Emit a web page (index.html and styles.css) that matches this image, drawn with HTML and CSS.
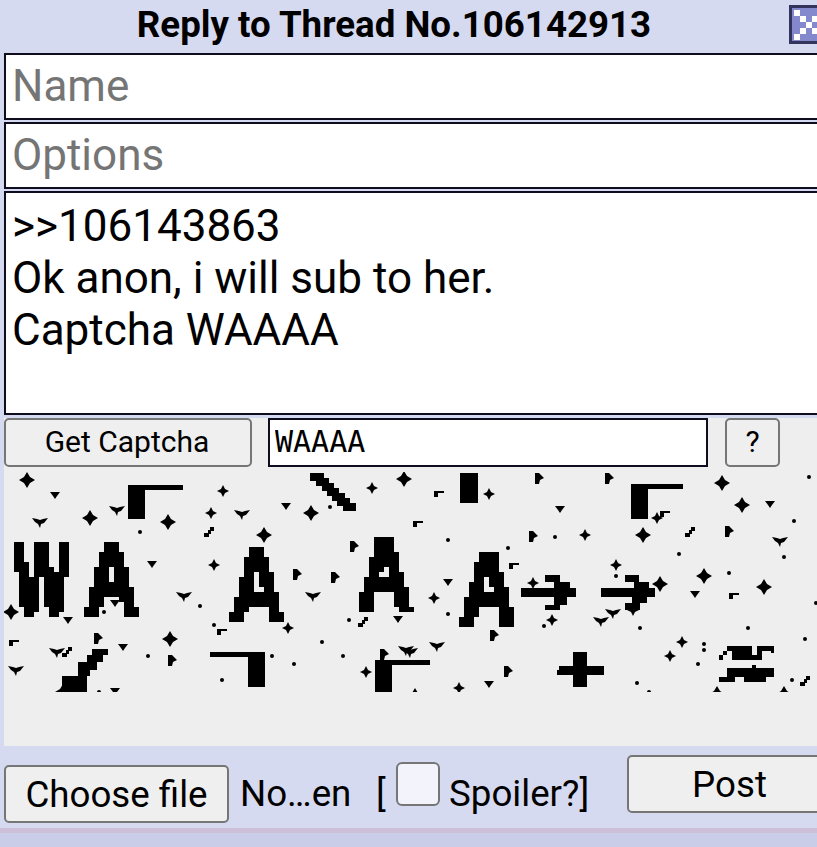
FILE: index.html
```html
<!DOCTYPE html>
<html lang="en">
<head>
<meta charset="utf-8">
<title>Reply to Thread No.106142913</title>
<link rel="stylesheet" href="styles.css">
</head>
<body>
<div class="panel">
  <div class="head">
    <div class="title">Reply to Thread No.106142913</div>
    <svg class="close" viewBox="0 0 37 39" width="37" height="39" shape-rendering="crispEdges">
      <rect width="37" height="39" fill="#34345c"/>
      <rect x="3" y="3" width="34" height="33" fill="#8488cc"/>
      <path fill="#fff" d="M5 5h6v6H5zM11 11h6v6h-6zM17 17h6v6h-6zM11 23h6v6h-6zM5 29h6v6H5zM23 11h6v6h-6zM23 23h6v6h-6z"/>
    </svg>
  </div>
  <form class="form">
    <input class="field" type="text" placeholder="Name">
    <input class="field" type="text" placeholder="Options">
    <textarea class="body-text">&gt;&gt;106143863
Ok anon, i will sub to her.
Captcha WAAAA</textarea>
    <div class="captcha">
      <div class="captcha-row">
        <button class="btn btn-get" type="button">Get Captcha</button>
        <input class="captcha-input" type="text" value="WAAAA">
        <button class="btn btn-help" type="button">?</button>
      </div>
      <svg class="captcha-img" viewBox="4 472 813 220" width="813" height="220">
        <defs>
          <filter id="px" filterUnits="userSpaceOnUse" primitiveUnits="userSpaceOnUse" x="4" y="472" width="813" height="220" color-interpolation-filters="sRGB">
            <feFlood x="6" y="474" width="1" height="1" flood-color="#000"/>
            <feComposite x="4" y="472" width="5" height="5"/>
            <feTile result="grid"/>
            <feComposite in="SourceGraphic" in2="grid" operator="in"/>
            <feComponentTransfer>
              <feFuncA type="discrete" tableValues="0 0 1 1"/>
            </feComponentTransfer>
            <feMorphology operator="dilate" radius="2"/>
          </filter>
          <polygon id="s" points="0,-8 3,-3 8,0 3,3 0,8 -3,3 -8,0 -3,-3"/>
          <polygon id="p" points="0,-6 2,-2 6,0 2,2 0,6 -2,2 -6,0 -2,-2"/>
          <polygon id="t" points="-5,-2 5,-2 2,2 0,5 -2,2"/>
          <polygon id="f" points="-4,-6 0,-6 5,-1 1,1 0,5 -4,5"/>
          <polygon id="b" points="-8,-4 -3,-3 0,-2 3,-3 8,-4 4,1 1,2 0,6 -2,2 -5,0"/>
          <polygon id="c" points="-5,-3 5,-3 5,-1 -1,-1 -1,3 -5,3"/>
          <polygon id="w" points="-5,1 -1,1 -1,-2 1,-2 1,-5 5,-5 5,-1 2,-1 2,2 0,2 0,5 -5,5"/>
          <circle id="d" r="2"/>
        </defs>
        <g class="glyphs" filter="url(#px)">
          <text transform="translate(14 615) scale(.58 1)">W</text>
          <text transform="translate(84 615) scale(.75 1)">A</text>
          <text transform="translate(229 622) scale(.76 1)">A</text>
          <text transform="translate(357 610) scale(.75 1)">A</text>
          <text transform="translate(460 623) scale(.76 1)">A</text>
        </g>
        <g class="shapes">
          <path d="M128 485h55v5h-38v29h-17z"/>
          <path d="M631 484h52v5h-35v30h-17z"/>
          <path d="M460 473h18v30h-18z"/>
          <path d="M310 473h14v5h5v5h5v5h5v5h6v5h5v5h6v8h-13v-5h-6v-5h-5v-5h-5v-5h-5v-5h-6v-5h-6z"/>
          <path d="M210 652h55v35h-17v-30h-38z"/>
          <path d="M375 660h55v5h-38v27h-17z"/>
          <path d="M92 649H108V655H103V662H97V670H90V676H87V692H62V676H78V662H87V655H92Z"/>
          <path d="M521 588H554V582H545V575H560V582H570V588H576V597H567V605H560V610H545V605H554V597H521Z"/>
          <path d="M601 588H634V582H625V575H639V582H649V588H655V597H647V603H640V610H625V603H632V597H601Z"/>
          <path d="M573 652h14v14h17v9h-17v12h-14v-12h-16v-5h2v-4h14z"/>
          <path d="M719 655h8v-9h25v9h5v-9h17v7h-3v-2h-9v9h-8v0h-22v-9h-9v9h-4z"/>
          <path d="M719 677h8v-9h47v9h-8v5h-22v-5h-9v5h-16zM752 665h4v3h-4z"/>
        </g>
        <g class="shapes">
          <use href="#s" x="27" y="480"/><use href="#s" x="90" y="518"/><use href="#s" x="168" y="522"/><use href="#s" x="311" y="513"/><use href="#s" x="264" y="535"/><use href="#s" x="404" y="479"/><use href="#s" x="722" y="483"/><use href="#s" x="742" y="505"/><use href="#s" x="643" y="535"/><use href="#s" x="704" y="576"/><use href="#s" x="764" y="587"/><use href="#s" x="11" y="612"/><use href="#s" x="170" y="639"/><use href="#s" x="660" y="584"/><use href="#s" x="717" y="694"/><use href="#s" x="784" y="694"/><use href="#s" x="415" y="696"/><use href="#s" x="63" y="692"/>
          <use href="#p" x="223" y="491"/><use href="#p" x="211" y="513"/><use href="#p" x="372" y="488"/><use href="#p" x="214" y="565"/><use href="#p" x="489" y="494"/><use href="#p" x="585" y="535"/><use href="#p" x="616" y="565"/><use href="#p" x="288" y="628"/><use href="#p" x="366" y="672"/><use href="#p" x="434" y="598"/><use href="#p" x="552" y="620"/><use href="#p" x="682" y="642"/><use href="#p" x="670" y="656"/><use href="#p" x="459" y="688"/><use href="#p" x="657" y="518"/><use href="#p" x="533" y="583"/><use href="#p" x="633" y="610"/>
          <use href="#t" x="55" y="494"/><use href="#t" x="286" y="505"/><use href="#t" x="152" y="563"/><use href="#t" x="560" y="508"/><use href="#t" x="770" y="503"/><use href="#t" x="115" y="602"/><use href="#t" x="123" y="646"/><use href="#t" x="115" y="690"/><use href="#t" x="398" y="618"/><use href="#t" x="448" y="581"/><use href="#t" x="695" y="593"/><use href="#t" x="489" y="683"/><use href="#t" x="68" y="619"/>
          <use href="#f" x="539" y="479"/><use href="#f" x="609" y="479"/><use href="#f" x="533" y="537"/><use href="#f" x="729" y="532"/><use href="#f" x="98" y="639"/><use href="#f" x="172" y="661"/><use href="#f" x="384" y="655"/><use href="#f" x="494" y="636"/><use href="#f" x="508" y="672"/><use href="#f" x="297" y="575"/><use href="#f" x="335" y="578"/><use href="#f" x="354" y="547"/>
          <use href="#b" x="40" y="522"/><use href="#b" x="242" y="514"/><use href="#b" x="117" y="510"/><use href="#b" x="780" y="541"/><use href="#b" x="184" y="596"/><use href="#b" x="313" y="596"/><use href="#b" x="16" y="670"/><use href="#b" x="57" y="652"/><use href="#b" x="406" y="650"/><use href="#b" x="437" y="646"/><use href="#b" x="410" y="652"/><use href="#b" x="601" y="621"/><use href="#b" x="613" y="613"/>
          <use href="#c" x="439" y="494"/><use href="#c" x="418" y="524"/><use href="#c" x="14" y="643"/><use href="#c" x="222" y="632"/><use href="#c" x="734" y="596"/><use href="#c" x="665" y="514"/><use href="#c" x="514" y="566"/>
          <use href="#w" x="690" y="532"/><use href="#w" x="209" y="532"/><use href="#w" x="363" y="622"/><use href="#w" x="805" y="681"/><use href="#w" x="67" y="652"/>
          <use href="#d" x="140" y="532"/><use href="#d" x="330" y="507"/><use href="#d" x="809" y="477"/><use href="#d" x="794" y="521"/><use href="#d" x="448" y="540"/><use href="#d" x="508" y="548"/><use href="#d" x="555" y="537"/><use href="#d" x="679" y="554"/><use href="#d" x="784" y="557"/><use href="#d" x="729" y="573"/><use href="#d" x="616" y="576"/><use href="#d" x="104" y="612"/><use href="#d" x="200" y="606"/><use href="#d" x="214" y="625"/><use href="#d" x="349" y="620"/><use href="#d" x="322" y="642"/><use href="#d" x="272" y="656"/><use href="#d" x="294" y="664"/><use href="#d" x="222" y="680"/><use href="#d" x="148" y="656"/><use href="#d" x="343" y="656"/><use href="#d" x="99" y="692"/><use href="#d" x="448" y="614"/><use href="#d" x="544" y="626"/><use href="#d" x="640" y="628"/><use href="#d" x="748" y="628"/><use href="#d" x="805" y="639"/><use href="#d" x="698" y="664"/><use href="#d" x="637" y="683"/><use href="#d" x="649" y="692"/><use href="#d" x="792" y="680"/><use href="#d" x="816" y="603"/><use href="#d" x="704" y="644"/><use href="#d" x="704" y="650"/>
        </g>
      </svg>
    </div>
    <div class="file-row">
      <button class="btn btn-file" type="button">Choose file</button>
      <span class="file-name">No…en</span>
      <span class="spoiler"><span class="bracket">[</span><span class="check"></span><span>Spoiler?]</span></span>
      <button class="btn btn-post" type="button">Post</button>
    </div>
  </form>
</div>
<div class="rule"></div>
</body>
</html>
```
FILE: styles.css
```css
html, body {
  margin: 0;
  height: 847px;
  overflow: hidden;
  background: #c9cde8;
  font-family: Roboto, sans-serif;
  color: #000;
}
.panel {
  width: 850px;
  height: 828px;
  background: #d6daf0;
}
.head {
  height: 50px;
  display: flex;
  align-items: flex-start;
}
.title {
  width: 788px;
  text-align: center;
  font-weight: 700;
  font-size: 36.7px;
  line-height: 49px;
}
.close {
  margin: 5px 0 0 1px;
  flex: none;
}
.form {
  margin: 3px 0 0 4px;
  display: flex;
  flex-direction: column;
  width: 830px;
}
.field {
  box-sizing: border-box;
  height: 67px;
  margin: 0 0 2px;
  padding: 0 6px 1px;
  border: 2px solid #0f0c1d;
  border-radius: 0;
  background: #fff;
  font: 44px Roboto, sans-serif;
  outline: none;
}
.field::placeholder { color: #757575; opacity: 1; }
.body-text {
  box-sizing: border-box;
  height: 224px;
  padding: 7px 6px;
  margin: 0;
  border: 2px solid #0f0c1d;
  background: #fff;
  font: 44px/52px Roboto, sans-serif;
  color: #000;
  resize: none;
  outline: none;
  overflow: hidden;
  display: block;
}
.captcha {
  margin-top: 3px;
  height: 328px;
  background: #eee;
}
.captcha-row {
  height: 49px;
  display: flex;
  align-items: stretch;
}
.btn {
  box-sizing: border-box;
  border: 2px solid #767676;
  border-radius: 5px;
  background: #efefef;
  color: #000;
  font-family: Roboto, sans-serif;
  padding: 0;
}
.btn-get { width: 248px; font-size: 30px; flex: none; padding: 0 2px 2px 0; }
.captcha-input {
  box-sizing: border-box;
  width: 440px;
  margin-left: 16px;
  padding: 0 5px 2px;
  border: 2px solid #0f0c1d;
  background: #fff;
  font: 30px "DejaVu Sans Mono", monospace;
  outline: none;
  flex: none;
}
.btn-help { width: 55px; margin-left: 17px; font-size: 30px; flex: none; padding-bottom: 2px; }
.captcha-img {
  display: block;
  margin-top: 5px;
}
.glyphs text {
  font: 700 102px "Liberation Sans", sans-serif;
  fill: #000;
  stroke: #000;
  stroke-width: 5px;
}
.shapes { fill: #000; }
.file-row {
  position: relative;
  display: flex;
  align-items: flex-start;
  height: 82px;
}
.btn-file {
  width: 225px;
  height: 58px;
  margin-top: 19px;
  font-size: 36.7px;
  flex: none;
}
.file-name {
  margin: 19px 0 0 11px;
  width: 136px;
  font-size: 36.7px;
  line-height: 58px;
  flex: none;
}
.spoiler {
  display: flex;
  align-items: flex-start;
  font-size: 36.7px;
  line-height: 58px;
  margin-top: 19px;
  width: 250px;
  flex: none;
}
.bracket { width: 20px; }
.check {
  box-sizing: border-box;
  width: 44px;
  height: 44px;
  margin: -3px 9px 0 0;
  border: 2px solid #767676;
  border-radius: 6px;
  background: #f3f4fb;
}
.btn-post {
  position: absolute;
  left: 623px;
  top: 9px;
  width: 207px;
  height: 58px;
  font-size: 36.7px;
  padding-right: 2px;
}
.rule {
  height: 5px;
  background: #cdbfd8;
}
```
